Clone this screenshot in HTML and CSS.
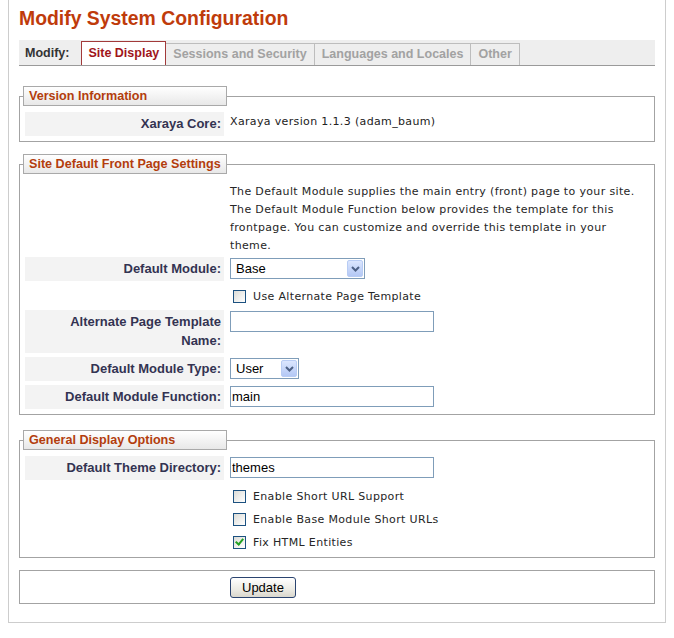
FILE: index.html
```html
<!DOCTYPE html>
<html lang="en">
<head>
<meta charset="utf-8">
<title>Modify System Configuration</title>
<link rel="stylesheet" href="styles.css">
</head>
<body>
<div class="page">
  <h1 class="title">Modify System Configuration</h1>
  <div class="tabs">
    <span class="tabs-label">Modify:</span>
    <a class="tab active">Site Display</a>
    <a class="tab">Sessions and Security</a>
    <a class="tab">Languages and Locales</a>
    <a class="tab">Other</a>
  </div>
  <form class="config">
    <fieldset class="group">
      <legend class="group-title">Version Information</legend>
      <div class="row">
        <div class="label">Xaraya Core:</div>
        <div class="value text">Xaraya version 1.1.3 (adam_baum)</div>
      </div>
    </fieldset>

    <fieldset class="group">
      <legend class="group-title">Site Default Front Page Settings</legend>
      <div class="row desc-row">
        <div class="blank"></div>
        <div class="value desc">The Default Module supplies the main entry (front) page to your site. The Default Module Function below provides the template for this frontpage. You can customize and override this template in your theme.</div>
      </div>
      <div class="row">
        <div class="label">Default Module:</div>
        <div class="value ctl">
          <span class="select wide"><span class="select-text">Base</span><span class="select-arrow"><svg width="9" height="6" viewBox="0 0 9 6"><polyline points="1,1 4.5,4.5 8,1" fill="none" stroke="#4d6185" stroke-width="2"/></svg></span></span>
        </div>
      </div>
      <div class="row check-row alt-check">
        <div class="blank"></div>
        <label class="value check-label"><input type="checkbox" class="check">Use Alternate Page Template</label>
      </div>
      <div class="row">
        <div class="label">Alternate Page Template Name:</div>
        <div class="value ctl"><input type="text" class="field" value=""></div>
      </div>
      <div class="row">
        <div class="label">Default Module Type:</div>
        <div class="value ctl">
          <span class="select narrow"><span class="select-text">User</span><span class="select-arrow"><svg width="9" height="6" viewBox="0 0 9 6"><polyline points="1,1 4.5,4.5 8,1" fill="none" stroke="#4d6185" stroke-width="2"/></svg></span></span>
        </div>
      </div>
      <div class="row">
        <div class="label">Default Module Function:</div>
        <div class="value ctl"><input type="text" class="field" value="main"></div>
      </div>
    </fieldset>

    <fieldset class="group display-group">
      <legend class="group-title">General Display Options</legend>
      <div class="row">
        <div class="label">Default Theme Directory:</div>
        <div class="value ctl"><input type="text" class="field" value="themes"></div>
      </div>
      <div class="row check-row first-check">
        <div class="blank"></div>
        <label class="value check-label"><input type="checkbox" class="check">Enable Short URL Support</label>
      </div>
      <div class="row check-row">
        <div class="blank"></div>
        <label class="value check-label"><input type="checkbox" class="check">Enable Base Module Short URLs</label>
      </div>
      <div class="row check-row">
        <div class="blank"></div>
        <label class="value check-label"><input type="checkbox" class="check" checked>Fix HTML Entities</label>
      </div>
    </fieldset>

    <fieldset class="group actions">
      <div class="row">
        <div class="blank"></div>
        <div class="value"><button type="button" class="button">Update</button></div>
      </div>
    </fieldset>
  </form>
</div>
</body>
</html>
```

FILE: styles.css
```css
* { box-sizing: border-box; }

body {
  margin: 0 8px 8px;
  background: #fff;
  font-family: "Liberation Sans", Arial, sans-serif;
}

.page {
  border: 1px solid #cdcdcd;
  border-top: 0;
  padding: 7px 10px 18px;
}

.title {
  margin: 0;
  font-size: 19.4px;
  line-height: 22px;
  font-weight: bold;
  color: #bf3b0b;
}

.tabs {
  margin-top: 11px;
  display: flex;
  align-items: flex-end;
  height: 26px;
  background: #eee;
  border-bottom: 1px solid #9a9a9a;
  padding-left: 6px;
}

.tabs-label {
  font-weight: bold;
  font-size: 12.5px;
  line-height: 23px;
  color: #333;
  margin-right: 12px;
}

.tab {
  font-weight: bold;
  font-size: 12.5px;
  line-height: 21px;
  color: #a2a2a2;
  padding: 0 7px;
  border-top: 1px solid #bdbdbd;
  border-right: 1px solid #bdbdbd;
  text-decoration: none;
}

.tab.active {
  color: #a0161b;
  background: #fff;
  line-height: 23px;
  padding: 0 6px;
  border: 1px solid #a23a3a;
  border-bottom: 0;
}

.config { margin: 0; }

.group {
  margin: 20px 0 0;
  padding: 6px 5px 5px;
  border: 1px solid #a3a3a3;
  min-width: 0;
}

.group + .group { margin-top: 12px; }
.group + .display-group { margin-top: 15px; }

.group-title {
  margin-left: -2px;
  width: 204px;
  height: 20px;
  padding: 0 0 0 5px;
  border: 1px solid #a9a9a9;
  background: linear-gradient(#ffffff, #e8e8e8);
  font-weight: bold;
  font-size: 12.6px;
  line-height: 18px;
  color: #b33d0d;
  white-space: nowrap;
  overflow: hidden;
}

.row {
  display: grid;
  grid-template-columns: 199px 1fr;
  column-gap: 6px;
  margin-top: 4px;
}

.group-title + .row,
.actions .row { margin-top: 0; }

.desc-row + .row { margin-top: 2px; }

.label {
  background: #f3f3f3;
  padding: 2px 3px 3px;
  line-height: 19px;
  text-align: right;
  font-weight: bold;
  font-size: 13px;
  color: #333352;
}

.value {
  font-family: "DejaVu Sans", Verdana, sans-serif;
  font-size: 11px;
  letter-spacing: 0.35px;
  color: #222;
}

.text {
  padding-top: 1px;
  line-height: 18px;
}

.desc {
  padding: 3px 6px 0 0;
  line-height: 18px;
  color: #262626;
}

.ctl { padding-top: 1px; }

.select {
  display: inline-flex;
  align-items: center;
  height: 21px;
  border: 1px solid #7f9db9;
  background: #fff;
  padding: 1px 1px 1px 5px;
  font-family: "Liberation Sans", Arial, sans-serif;
  font-size: 13px;
  letter-spacing: 0;
  color: #000;
}

.select.wide { width: 135px; }
.select.narrow { width: 69px; }

.select-text { flex: 1; }

.select-arrow {
  width: 16px;
  height: 17px;
  display: flex;
  align-items: center;
  justify-content: center;
  border: 1px solid #b8ccf4;
  border-radius: 2px;
  background: linear-gradient(#dbe6fe, #b4c8f5);
}

.field {
  display: block;
  width: 204px;
  height: 21px;
  margin: 0;
  padding: 0 1px;
  border: 1px solid #7f9db9;
  background: #fff;
  font-family: "Liberation Sans", Arial, sans-serif;
  font-size: 13px;
  color: #000;
  outline: none;
}

.check-row { margin-top: 3px; }
.check-row.first-check { margin-top: 6px; }
.check-row.alt-check { margin-top: 5px; }

.check-label {
  display: flex;
  align-items: center;
  height: 20px;
  color: #262626;
}

.check {
  appearance: none;
  -webkit-appearance: none;
  flex: none;
  width: 13px;
  height: 13px;
  margin: 0 7px 0 3px;
  border: 1px solid #1c5180;
  background: linear-gradient(135deg, #dcdcd7, #ffffff);
  display: grid;
  place-items: center;
}

.check:checked::after {
  content: "";
  width: 3px;
  height: 6px;
  margin-top: -2px;
  border: solid #21a121;
  border-width: 0 2px 2px 0;
  transform: rotate(40deg);
}

.button {
  display: block;
  height: 21px;
  margin: 0;
  padding: 0 11px;
  border: 1px solid #2b4470;
  border-radius: 3px;
  background: linear-gradient(#ffffff, #ecebe4 60%, #d9d7cd);
  font-family: "Liberation Sans", Arial, sans-serif;
  font-size: 13px;
  color: #000;
}
```
